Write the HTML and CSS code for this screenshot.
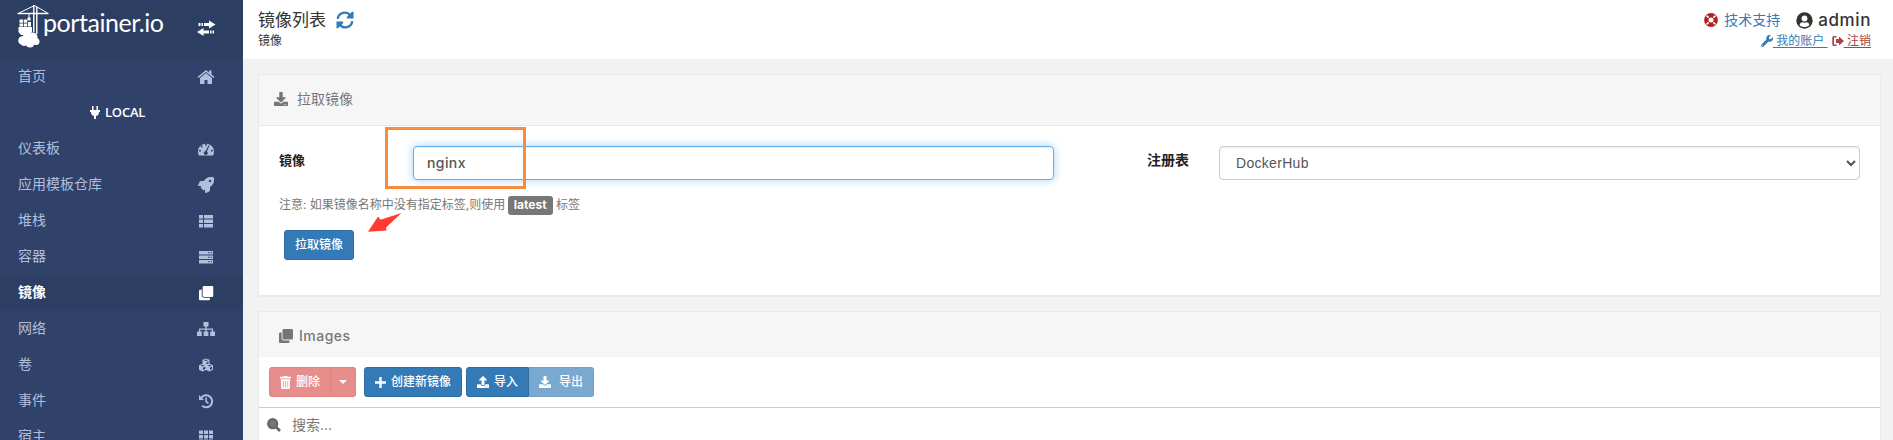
FILE: index.html
```html
<!DOCTYPE html>
<html lang="zh-CN">
<head>
<meta charset="utf-8">
<title>Portainer</title>
<link rel="stylesheet" href="styles.css">
</head>
<body>
<svg class="defs" aria-hidden="true">
  <symbol id="download" viewBox="0 0 512 512"><path d="M216 0h80c13.300 0 24 10.700 24 24v168h87.700c17.800 0 26.700 21.500 14.100 34.100L269.700 378.300c-7.500 7.500-19.800 7.500-27.300 0L90.100 226.100c-12.600-12.600-3.700-34.100 14.100-34.100H192V24c0-13.300 10.700-24 24-24zm296 376v112c0 13.300-10.700 24-24 24H24c-13.300 0-24-10.700-24-24V376c0-13.300 10.700-24 24-24h146.700l49 49c20.100 20.100 52.500 20.100 72.600 0l49-49H488c13.300 0 24 10.700 24 24zm-124 88c0-11-9-20-20-20s-20 9-20 20 9 20 20 20 20-9 20-20zm64 0c0-11-9-20-20-20s-20 9-20 20 9 20 20 20 20-9 20-20z"/></symbol>
  <symbol id="upload" viewBox="0 0 512 512"><path d="M296 384h-80c-13.300 0-24-10.700-24-24V192h-87.700c-17.800 0-26.700-21.500-14.100-34.100L242.300 5.700c7.500-7.500 19.800-7.500 27.300 0l152.200 152.200c12.600 12.600 3.700 34.100-14.100 34.100H320v168c0 13.300-10.700 24-24 24zm216-8v112c0 13.300-10.700 24-24 24H24c-13.300 0-24-10.700-24-24V376c0-13.300 10.700-24 24-24h136v8c0 30.900 25.100 56 56 56h80c30.900 0 56-25.100 56-56v-8h136c13.300 0 24 10.700 24 24zm-124 88c0-11-9-20-20-20s-20 9-20 20 9 20 20 20 20-9 20-20zm64 0c0-11-9-20-20-20s-20 9-20 20 9 20 20 20 20-9 20-20z"/></symbol>
  <symbol id="clone" viewBox="0 0 512 512"><path d="M464 0c26.500 0 48 21.500 48 48v288c0 26.500-21.500 48-48 48H176c-26.500 0-48-21.500-48-48V48c0-26.500 21.500-48 48-48h288M176 416c-44.100 0-80-35.900-80-80V128H48c-26.500 0-48 21.500-48 48v288c0 26.500 21.500 48 48 48h288c26.500 0 48-21.500 48-48v-48H176z"/></symbol>
</svg>
<div class="app">
  <nav class="sidebar">
    <div class="brand">
      <svg class="logo" width="170" height="59" viewBox="0 0 170 59">
        <g stroke="#fff" fill="none"><path d="M17.500 13.500H48.500" stroke-width="1.500"/><path d="M19 13L34.500 5.500 47.500 13" stroke-width="1"/><path d="M33.800 5V32M36.800 7V34" stroke-width="1.400"/><path d="M29 14v5" stroke-width="1"/></g>
        <path fill="#fff" d="M27.500 17.500h3v3h-3zM19.500 19.500h3.700v3.200h-3.700zM24 19.500h3.200v3.200H24zM19.500 23.500h3.700v3h-3.700zM24 23.500h3.200v3H24zM28 22h3v4.500h-3zM18.500 27h13.500v5l-3 3h-8l-2.500-3z"/>
        <g fill="#fff"><circle cx="22.500" cy="40.500" r="4.300"/><circle cx="27" cy="37" r="4.200"/><circle cx="33" cy="37" r="4.500"/><circle cx="36" cy="41.500" r="3.500"/><circle cx="30" cy="43" r="4.600"/><circle cx="24" cy="43" r="3"/></g>
        <text class="wordmark" x="43" y="32" textLength="121" lengthAdjust="spacing">portainer.io</text>
      </svg>
      <svg class="swap" width="20" height="18" viewBox="0 0 20 18"><path fill="#fff" d="M1.500 3h2v3h-2zM4.500 3H6v3H4.500zM7 3h5V.500l6.500 4-6.500 4V6H7zM17 10.500h-1.500v3H17zM14.500 10.500H13v3h1.500zM12 10.500H6.500V8L0 12l6.500 4v-2.500H12z"/></svg>
    </div>
    <a class="item"><span>首页</span><svg viewBox="0 0 18 16"><path d="M9 4l6 5v6h-4.500v-4h-3v4H3V9zM9 1l3 2.500V1.500h2.500v4L17.500 8l-1 1L9 3 1.500 9l-1-1z"/></svg></a>
    <div class="endpoint"><svg viewBox="0 0 10 13" width="10" height="13"><path fill="#fff" d="M2 0h1.500v4h3V0H8v4h2v2H9c0 2.500-1 3.500-3 4v3H4v-3C2 9.500 1 8.500 1 6H0V4h2z"/></svg><span>LOCAL</span></div>
    <a class="item"><span>仪表板</span><svg viewBox="0 0 18 16"><path fill-rule="evenodd" d="M2 14.500A8 8 0 1 1 16 14.500zM9 2.800a1 1 0 1 0 0 2 1 1 0 0 0 0-2zM4.700 4.500a1 1 0 1 0 0 2 1 1 0 0 0 0-2zM3 8.700a1 1 0 1 0 0 2 1 1 0 0 0 0-2zM15 8.700a1 1 0 1 0 0 2 1 1 0 0 0 0-2zM11.500 4.200L8.700 10a2 2 0 1 0 1.300.400l2.500-5.800z"/></svg></a>
    <a class="item"><span>应用模板仓库</span><svg viewBox="0 0 512 512"><path d="M505 19c-1-6-7-11-12-12-34-7-60-7-86-7-107 0-171 57-219 128H95c-16 0-35 12-43 26L3 253c-8 16 3 35 20 35h95l-26 26c-9 9-9 24 0 33l73 73c9 9 24 9 33 0l26-26v95c0 17 19 28 35 20l98-49c15-8 27-27 27-43v-94c71-49 128-113 128-219 0-26 0-52-7-85zM384 168a40 40 0 1 1 0-80 40 40 0 0 1 0 80z"/></svg></a>
    <a class="item"><span>堆栈</span><svg viewBox="0 0 18 16"><path d="M2 2h4v3.500H2zM7 2h9v3.500H7zM2 6.500h4V10H2zM7 6.500h9V10H7zM2 11h4v3.500H2zM7 11h9v3.500H7z"/></svg></a>
    <a class="item"><span>容器</span><svg viewBox="0 0 18 16"><path fill-rule="evenodd" d="M2 2h14v3.500H2zM2 6.500h14V10H2zM2 11h14v3.500H2zM11 3.200v1h1.500v-1zM13.500 3.200v1H15v-1zM11 7.700v1h1.500v-1zM13.500 7.700v1H15v-1zM11 12.200v1h1.500v-1zM13.500 12.200v1H15v-1z"/></svg></a>
    <a class="item active"><span>镜像</span><svg viewBox="0 0 18 16"><use href="#clone" x="2" y="1" width="14.500" height="14.500"/></svg></a>
    <a class="item"><span>网络</span><svg viewBox="0 0 18 16"><path d="M6.500 1h5v4.500H9.700V7.500H16V10.500h2V15h-4.800v-4.500h1.500V8.800H9.700v1.700h1.700V15H6.600v-4.500h1.700V8.800h-5v1.700h1.500V15H0v-4.500h2V7.500h6.300v-2H6.500z"/></svg></a>
    <a class="item"><span>卷</span><svg viewBox="0 0 18 16"><path fill-rule="evenodd" d="M9 1.500l3.500 1.300v4L16 8.200v4.600l-3.500 1.700L9 13l-3.500 1.500L2 12.800V8.200l3.500-1.400v-4zM7 3.300l2 .8 2-.8-2-.7zM9.600 5.300v2l1.800-.8V4.500zM3.500 8.600l2 .8 2-.8-2-.7zM10.500 8.600l2 .8 2-.8-2-.7zM6 10.500v2.500l2.200-1v-2.300zM13 10.500v2.500l2-1V9.700z"/></svg></a>
    <a class="item"><span>事件</span><svg viewBox="0 0 18 16"><path d="M2 2v5h5L5.200 5.200A5 5 0 1 1 5.800 12L4.500 13.500A7 7 0 1 0 3.800 3.800zM8.300 4.500h1.600v3.600l2 1.500-1 1.300-2.600-2z"/></svg></a>
    <a class="item"><span>宿主</span><svg viewBox="0 0 18 16"><path d="M2 1.500h4V5H2zM7 1.500h4V5H7zM12 1.500h4V5h-4zM2 6h4v3.500H2zM7 6h4v3.500H7zM12 6h4v3.500h-4zM2 10.500h4V14H2zM7 10.500h4V14H7zM12 10.500h4V14h-4z"/></svg></a>
  </nav>
  <main class="content">
    <header class="header">
      <div>
        <div class="title">镜像列表 <svg width="18" height="18" viewBox="0 0 18 18"><path d="M1.700 7.800A7 7 0 0 1 14.300 4.500M16.300 10.200A7 7 0 0 1 3.700 13.500" fill="none" stroke="#337ab7" stroke-width="2.300"/><path fill="#337ab7" d="M17.500.800v6.700h-6.700V6L16 .800zM.500 17.200v-6.700h6.700V12L2 17.200z"/></svg></div>
        <div class="crumb">镜像</div>
      </div>
      <div class="account">
        <div class="who">
          <svg width="14" height="14" viewBox="0 0 14 14"><circle cx="7" cy="7" r="4.700" fill="none" stroke="#b22222" stroke-width="4.400"/><path stroke="#fff" stroke-width="1.600" d="M2.600 2.600l2 2M11.400 2.600l-2 2M2.600 11.400l2-2M11.400 11.400l-2-2"/></svg>
          <a class="support">技术支持</a>
          <svg class="avatar" width="17" height="17" viewBox="0 0 17 17"><circle cx="8.500" cy="8.500" r="8.200" fill="#333"/><circle cx="8.500" cy="6.500" r="2.900" fill="#fff"/><path fill="#fff" d="M3.500 13c.5-2 1.800-2.700 3-2.700 1.300.5 2.700.5 4 0 1.200 0 2.500.7 3 2.700-2.500 2.700-7.500 2.700-10 0z"/></svg>
          <span class="user">admin</span>
        </div>
        <div class="links">
          <svg width="12" height="12" viewBox="0 0 512 512"><path fill="#337ab7" d="M508 109c-2-9-13-12-20-5l-74 74-68-11-12-68 75-75c7-7 3-18-6-20-48-12-100 1-138 38-39 40-51 98-34 149L19 402a64 64 0 0 0 91 91l212-212c50 17 108 5 149-34 38-38 50-90 37-138zM64 472a24 24 0 1 1 0-48 24 24 0 0 1 0 48z"/></svg><a class="mine">&nbsp;我的账户&nbsp;</a>
          <svg class="exit" width="12" height="12" viewBox="0 0 12 12"><path fill="#a94442" d="M4.500 1v1.500H2v7h2.500V11H2Q.3 11 .3 9.500v-7Q.3 1 2 1zM7 1.500L12 6 7 10.500V8H4V4h3z"/></svg><a class="out">&nbsp;注销</a>
        </div>
      </div>
    </header>
    <section class="widget pull">
      <div class="head"><svg width="14" height="14"><use href="#download"/></svg><span>拉取镜像</span></div>
      <div class="body">
        <div class="fields">
          <label>镜像</label>
          <input class="control focused" value="nginx">
          <label class="registry">注册表</label>
          <select class="control"><option>DockerHub</option></select>
        </div>
        <p class="note">注意: 如果镜像名称中没有指定标签,则使用 <b class="tag">latest</b> 标签</p>
        <button class="btn submit">拉取镜像</button>
        <div class="marker"></div>
        <svg class="arrow" width="36" height="20" viewBox="0 0 36 20"><path fill="#ff3b30" d="M33.500 0L18 14.500l.5 3L0 18.700 10 3.500l2.500 3.200z"/></svg>
      </div>
    </section>
    <section class="widget images">
      <div class="head"><svg width="14" height="14"><use href="#clone"/></svg><span>Images</span></div>
      <div class="toolbar">
        <div class="group danger"><button class="btn remove"><svg width="11" height="13" viewBox="0 0 11 13"><path fill-rule="evenodd" d="M0 .800h3.300L4 0h3l.7.800H11v1.600H0zM.800 3.200h9.400L9.700 13H1.300zM3 5v6.500h.7V5zM5.200 5v6.500h.7V5zM7.400 5v6.500h.7V5z"/></svg><span>删除</span></button><button class="btn toggle"><i class="caret"></i></button></div>
        <button class="btn create"><svg width="11" height="11" viewBox="0 0 11 11"><path d="M4.300 0h2.400v4.300H11v2.400H6.700V11H4.300V6.700H0V4.300h4.300z"/></svg><span>创建新镜像</span></button>
        <div class="group"><button class="btn import"><svg width="12" height="12"><use href="#upload"/></svg><span>导入</span></button><button class="btn export"><svg width="12" height="12"><use href="#download"/></svg><span>导出</span></button></div>
      </div>
      <div class="search"><svg width="14" height="14" viewBox="0 0 14 14" fill="none" stroke="#666"><circle cx="5.700" cy="5.700" r="4.500" stroke-width="2.200"/><path d="M9 9l4 4" stroke-width="2.600"/></svg><span>搜索...</span></div>
    </section>
  </main>
</div>
</body>
</html>
```
FILE: styles.css
```css
* { box-sizing: border-box; }
html { height: 440px; overflow: hidden; }
body { margin: 0; height: 440px; overflow: hidden; background: #f2f2f2; color: #333; font: 14px/20px Inter, "Noto Sans CJK SC", sans-serif; }
.defs { display: none; }
svg { flex: none; fill: currentColor; }
.app { display: flex; height: 440px; overflow: hidden; }

.sidebar { width: 243px; height: 440px; flex: none; background: #30426a; color: #b2bfdc; overflow: hidden; }
.brand { height: 59px; background: #2d3e63; display: flex; }
.wordmark { font: 400 25px Lato, sans-serif; fill: #fff; }
.swap { margin: 20px 0 0 27px; }
.item { height: 36px; display: flex; align-items: center; justify-content: space-between; padding: 0 28px 3px 18px; }
.item svg { width: 18px; height: 16px; margin-top: 3px; }
.item.active { background: #2d3e63; color: #fff; font-weight: 700; }
.endpoint { height: 36px; display: flex; align-items: center; gap: 5px; padding: 0 0 2px 90px; color: #fff; font: 600 13px/20px "Open Sans", sans-serif; letter-spacing: -.2px; }

.content { flex: 1; min-width: 0; height: 440px; overflow: hidden; }
.header { height: 59px; background: #fff; display: flex; justify-content: space-between; padding: 8px 22px 0 15px; }
.title { display: flex; align-items: center; height: 24px; font-size: 17px; gap: 10px; }
.crumb { font-size: 12px; line-height: 18px; }
.who { display: flex; align-items: center; justify-content: flex-end; height: 24px; }
.support { color: #337ab7; margin: 0 16px 0 6px; }
.user { font-size: 17px; font-weight: 500; margin-left: 5px; letter-spacing: .6px; }
.links { display: flex; align-items: center; justify-content: flex-end; height: 18px; font-size: 12px; }
.links a { text-decoration: underline; text-underline-offset: 2px; }
.mine { color: #337ab7; }
.exit { margin-left: 4px; }
.out { color: #a94442; }

.widget { margin: 15px 12px 0 15px; background: #fff; border: 1px solid #e9e9e9; border-bottom-width: 2px; border-radius: 2px; }
.pull { height: 223px; }
.images { height: 150px; margin-top: 14px; }
.head { display: flex; align-items: center; background: #f6f6f6; color: #767676; }
.pull .head { height: 51px; padding: 0 0 2px 15px; gap: 9px; border-bottom: 1px solid #e9e9e9; }
.images .head { height: 45px; padding: 2px 0 0 20px; gap: 6px; font-weight: 500; letter-spacing: .5px; }
.body { position: relative; padding: 20px; }
.fields { display: grid; grid-template-columns: 134px 641px 93px 72px 641px; height: 34px; }
.fields label { font-size: 13px; font-weight: 700; color: #222; padding-top: 4px; }
.fields .registry { grid-column: 4; font-size: 14px; }
.control { width: 100%; height: 34px; padding: 6px 12px; border: 1px solid #ccc; border-radius: 4px; background: #fff; color: #555; font: 14px/20px Inter, sans-serif; box-shadow: inset 0 1px 1px rgba(0,0,0,.075); outline: none; }
.focused { border-color: #66afe9; letter-spacing: .4px; font-weight: 500; padding: 5px 13px 7px; box-shadow: inset 0 1px 1px rgba(0,0,0,.075), 0 0 8px rgba(102,175,233,.6); }
select.control { font-family: "Liberation Sans", sans-serif; letter-spacing: .3px; }
.note { margin: 15px 0 0; font-size: 12px; line-height: 20px; color: #767676; white-space: nowrap; }
.tag { display: inline-block; width: 45px; height: 19px; line-height: 18px; text-align: center; border-radius: 3px; background: #777; color: #fff; margin-left: -1px; }
.btn { display: inline-flex; align-items: center; justify-content: center; height: 30px; padding: 0; border: 1px solid #2e6da4; border-radius: 3px; background: #337ab7; color: #fff; font: 500 12px/18px Inter, "Noto Sans CJK SC", sans-serif; gap: 5px; }
.submit { display: flex; width: 70px; margin: 15px 0 0 5px; }
.marker { position: absolute; left: 126px; top: 1px; width: 141px; height: 62px; border: 3px solid #f98b3c; }
.arrow { position: absolute; left: 109px; top: 87px; }

.toolbar { display: flex; height: 51px; padding: 10px; border-bottom: 1px solid #ccc; }
.group { display: flex; }
.danger { opacity: .65; margin-right: 8px; }
.danger .btn { background: #d9534f; border-color: #d43f3a; }
.remove { width: 62px; border-radius: 3px 0 0 3px; }
.danger .toggle, .toggle { width: 25px; border-left: 0; border-radius: 0 3px 3px 0; }
.caret { border: 4px solid transparent; border-top-color: #fff; border-bottom: 0; }
.create { width: 98px; margin-right: 4px; }
.import { width: 63px; border-radius: 3px 0 0 3px; }
.export { width: 65px; border-left: 0; border-radius: 0 3px 3px 0; opacity: .65; gap: 8px; }
.search { display: flex; align-items: center; gap: 11px; height: 32px; padding: 2px 8px 0; color: #777; }
```
